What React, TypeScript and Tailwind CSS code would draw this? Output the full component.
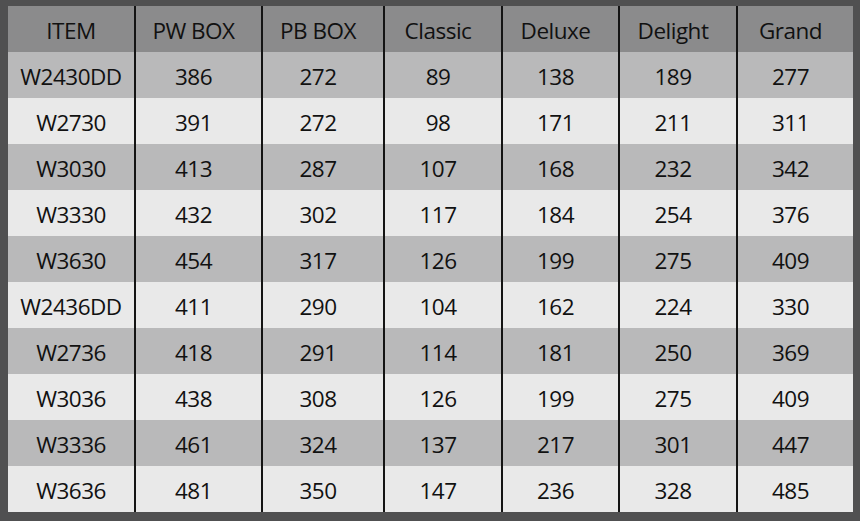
const HEADERS = ['ITEM', 'PW BOX', 'PB BOX', 'Classic', 'Deluxe', 'Delight', 'Grand'];

const ROWS: (string | number)[][] = [
  ['W2430DD', 386, 272, 89, 138, 189, 277],
  ['W2730', 391, 272, 98, 171, 211, 311],
  ['W3030', 413, 287, 107, 168, 232, 342],
  ['W3330', 432, 302, 117, 184, 254, 376],
  ['W3630', 454, 317, 126, 199, 275, 409],
  ['W2436DD', 411, 290, 104, 162, 224, 330],
  ['W2736', 418, 291, 114, 181, 250, 369],
  ['W3036', 438, 308, 126, 199, 275, 409],
  ['W3336', 461, 324, 137, 217, 301, 447],
  ['W3636', 481, 350, 147, 236, 328, 485],
];

// column widths incl. the 2px divider on the right
const COL_W = ['w-[128px]', 'w-[127px]', 'w-[122px]', 'w-[118px]', 'w-[117px]', 'w-[118px]', 'w-[115px]'];

function Row({ cells, bg }: { cells: (string | number)[]; bg: string }) {
  return (
    <div className={`flex h-[46px] ${bg}`}>
      {cells.map((c, i) => (
        <div
          key={i}
          className={`${COL_W[i]} flex items-center justify-center pt-[3px] ${i > 0 ? 'pr-[10px]' : ''} ${
            i < cells.length - 1 ? 'border-r-2 border-[#141414]' : ''
          }`}
        >
          {c}
        </div>
      ))}
    </div>
  );
}

export default function App() {
  return (
    <div
      className="w-[860px] h-[521px] bg-[#505051] pt-[6px] pl-[8px] pr-[7px] pb-[9px] text-[22.5px] tracking-[-0.5px] text-[#111]"
      style={{ fontFamily: '"Open Sans", "Noto Sans", sans-serif' }}
    >
      <div className="flex flex-col">
        <Row cells={HEADERS} bg="bg-[#8b8b8c]" />
        {ROWS.map((r, i) => (
          <Row key={i} cells={r} bg={i % 2 === 0 ? 'bg-[#b9b9ba]' : 'bg-[#e9e9e9]'} />
        ))}
      </div>
    </div>
  );
}
